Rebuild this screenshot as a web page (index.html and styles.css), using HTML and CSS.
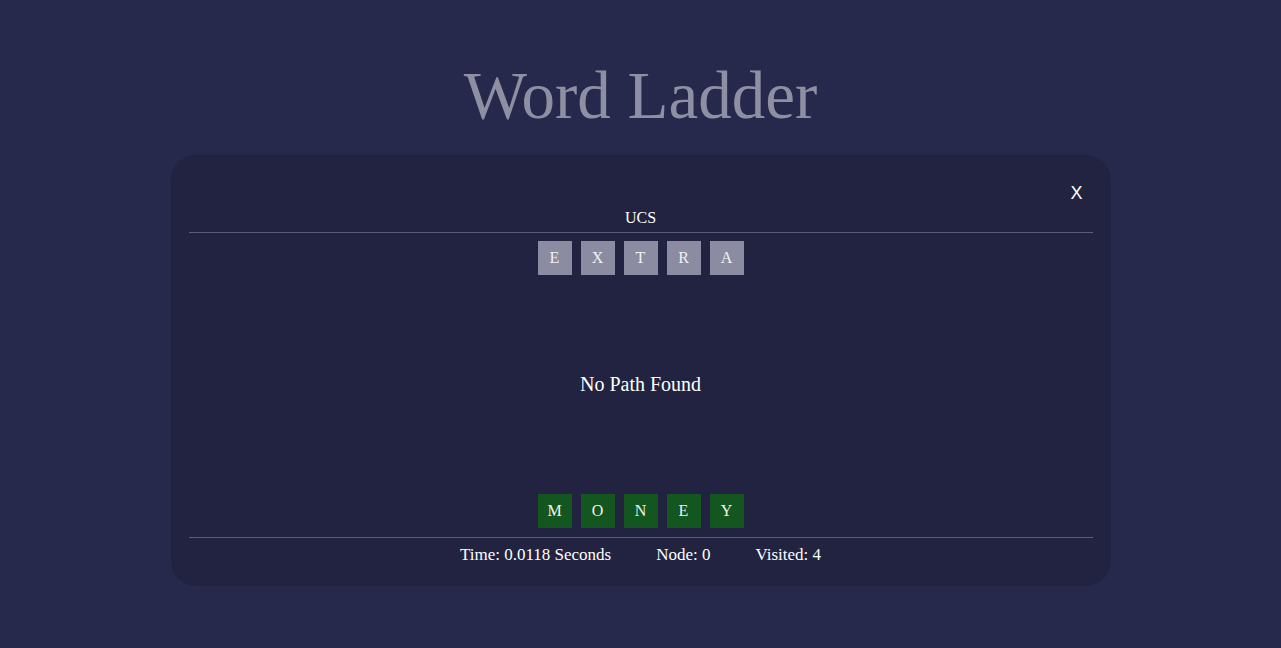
FILE: index.html
```html
<!DOCTYPE html>
<html lang="en">
<head>
<meta charset="utf-8">
<title>Word Ladder</title>
<link rel="stylesheet" href="styles.css">
</head>
<body>
  <h1 class="title">Word Ladder</h1>
  <div class="modal">
    <div class="close-row"><span class="close">X</span></div>
    <div class="algo">UCS</div>
    <div class="tiles">
      <span class="tile tile-grey">E</span>
      <span class="tile tile-grey">X</span>
      <span class="tile tile-grey">T</span>
      <span class="tile tile-grey">R</span>
      <span class="tile tile-grey">A</span>
    </div>
    <div class="result">No Path Found</div>
    <div class="tiles tiles-target">
      <span class="tile tile-green">M</span>
      <span class="tile tile-green">O</span>
      <span class="tile tile-green">N</span>
      <span class="tile tile-green">E</span>
      <span class="tile tile-green">Y</span>
    </div>
    <div class="stats">
      <span>Time: 0.0118 Seconds</span>
      <span>Node: 0</span>
      <span>Visited: 4</span>
    </div>
  </div>
</body>
</html>
```
FILE: styles.css
```css
html, body {
  margin: 0;
  padding: 0;
}
body {
  background: #26294b;
  font-family: "Liberation Serif", "Times New Roman", serif;
  color: #ffffff;
  min-height: 648px;
}
.title {
  margin: 0;
  padding-top: 58px;
  font-size: 67px;
  line-height: 75px;
  font-weight: normal;
  text-align: center;
  color: #8e8fa3;
}
.modal {
  width: 940px;
  box-sizing: border-box;
  margin: 22px auto 0;
  padding: 26px 18px 21px;
  background: #212341;
  border-radius: 25px;
}
.close-row {
  height: 22px;
  text-align: right;
  padding-right: 10px;
}
.close {
  display: inline-block;
  padding-top: 1px;
  font-family: "Liberation Sans", Arial, sans-serif;
  font-size: 18px;
  line-height: 22px;
  color: #ffffff;
}
.algo {
  margin-top: 5px;
  font-size: 16px;
  line-height: 20px;
  text-align: center;
  padding-bottom: 4px;
  border-bottom: 1px solid #5b5d7a;
}
.tiles {
  display: flex;
  justify-content: center;
  gap: 9px;
  margin-top: 8px;
}
.tile {
  width: 34px;
  height: 34px;
  display: flex;
  align-items: center;
  justify-content: center;
  font-size: 16px;
  color: #f2f2f2;
}
.tile-grey {
  background: #8b8ca1;
}
.tile-green {
  background: #13561f;
}
.result {
  height: 219px;
  display: flex;
  align-items: center;
  justify-content: center;
  font-size: 20px;
}
.tiles-target {
  margin-top: 0;
  padding-bottom: 9px;
  border-bottom: 1px solid #5b5d7a;
}
.stats {
  display: flex;
  justify-content: center;
  gap: 45px;
  padding-top: 6px;
  font-size: 17px;
  line-height: 21px;
}
```
